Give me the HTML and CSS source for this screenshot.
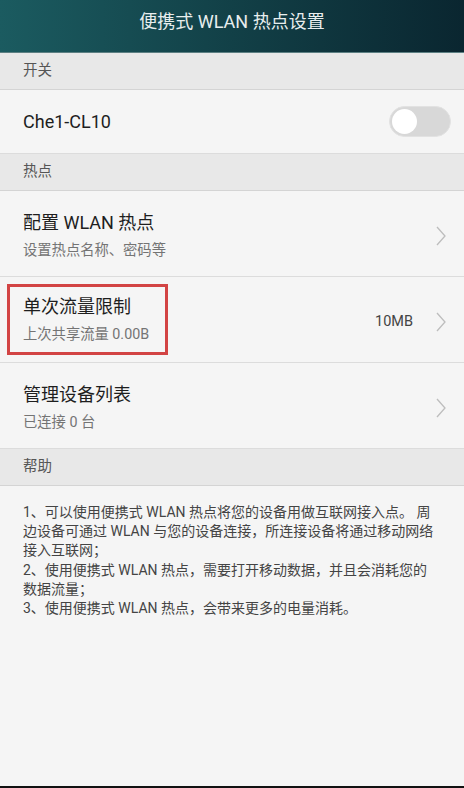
FILE: index.html
```html
<!DOCTYPE html>
<html>
<head>
    <meta charset="UTF-8">
    <link rel="stylesheet" href="styles.css">
</head>
<body>
<div class="screen">
    <div class="titlebar">便携式 WLAN 热点设置</div>

    <div class="section">开关</div>
    <div class="row row-switch">
        <div class="row-text">
            <div class="row-title">Che1-CL10</div>
        </div>
        <div class="toggle"><span class="knob"></span></div>
    </div>

    <div class="section">热点</div>
    <div class="row">
        <div class="row-text">
            <div class="row-title">配置 WLAN 热点</div>
            <div class="row-sub">设置热点名称、密码等</div>
        </div>
        <svg class="chevron" viewBox="0 0 10 20" width="10" height="20">
            <path d="M1 1 L9 10 L1 19" fill="none" stroke="#bdbdbd" stroke-width="1.3"/>
        </svg>
    </div>
    <div class="row">
        <div class="row-text marked">
            <div class="row-title">单次流量限制</div>
            <div class="row-sub">上次共享流量 0.00B</div>
        </div>
        <span class="row-value">10MB</span>
        <svg class="chevron" viewBox="0 0 10 20" width="10" height="20">
            <path d="M1 1 L9 10 L1 19" fill="none" stroke="#bdbdbd" stroke-width="1.3"/>
        </svg>
    </div>
    <div class="row">
        <div class="row-text">
            <div class="row-title">管理设备列表</div>
            <div class="row-sub">已连接 0 台</div>
        </div>
        <svg class="chevron" viewBox="0 0 10 20" width="10" height="20">
            <path d="M1 1 L9 10 L1 19" fill="none" stroke="#bdbdbd" stroke-width="1.3"/>
        </svg>
    </div>

    <div class="section">帮助</div>
    <div class="help">
        <p>1、可以使用便携式 WLAN 热点将您的设备用做互联网接入点。 周边设备可通过 WLAN 与您的设备连接，所连接设备将通过移动网络接入互联网；</p>
        <p>2、使用便携式 WLAN 热点，需要打开移动数据，并且会消耗您的数据流量；</p>
        <p>3、使用便携式 WLAN 热点，会带来更多的电量消耗。</p>
    </div>
    <div class="bottom-line"></div>
</div>
</body>
</html>
```

FILE: styles.css
```css
* {
    box-sizing: border-box;
    font-family: Roboto, "Noto Sans CJK SC", sans-serif;
}

body {
    margin: 0;
    background-color: #f5f5f5;
}

.screen {
    width: 464px;
    height: 788px;
    display: flex;
    flex-direction: column;
    background-color: #f5f5f5;
}

.titlebar {
    height: 53px;
    background: linear-gradient(90deg, #1b5b60 0%, #124047 50%, #0a2630 100%);
    color: #e8eeee;
    font-size: 18px;
    text-align: center;
    line-height: 44px;
    border-bottom: 1px solid #5d8083;
}

.section {
    height: 37px;
    background-color: #e8e8e8;
    color: #555;
    font-size: 14.5px;
    padding-left: 23px;
    line-height: 36px;
    border-bottom: 1px solid #d4d4d4;
}

.row {
    height: 86px;
    display: flex;
    align-items: center;
    padding: 4px 18px 0 23px;
    border-bottom: 1px solid #dcdcdc;
}

.row-switch {
    height: 64px;
    padding: 0 13px 0 23px;
}

.row-text {
    flex: 1;
}

.row-title {
    font-size: 18px;
    color: #1e1e1e;
    line-height: 24px;
}

.row-sub {
    font-size: 14.3px;
    color: #747474;
    line-height: 20px;
    margin-top: 5px;
}

.marked {
    flex: 0 0 auto;
    margin-left: -16px;
    margin-right: auto;
    margin-top: -4px;
    padding: 8px 4px 8px 13px;
    border: 3px solid #d24444;
    width: 161px;
}

.row-value {
    font-size: 14.5px;
    color: #444;
    margin-right: 23px;
}

.chevron {
    display: block;
}

.toggle {
    width: 62px;
    height: 31px;
    border-radius: 16px;
    background-color: #d8d8d8;
    border: 1px solid #e2e2e2;
    padding: 2px;
}

.knob {
    display: block;
    width: 25px;
    height: 25px;
    border-radius: 50%;
    background-color: #fff;
}

.help {
    flex: 1;
    padding: 17px 24px 0 23px;
    font-size: 14px;
    color: #444;
    line-height: 19.2px;
}

.help p {
    margin: 0;
}

.bottom-line {
    height: 2px;
    background-color: #111;
}
```
